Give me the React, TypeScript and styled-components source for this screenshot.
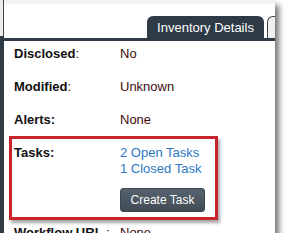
import styled, { createGlobalStyle } from "styled-components";

const GlobalStyle = createGlobalStyle`
  html, body {
    margin: 0;
    padding: 0;
    background: #ffffff;
  }
  body {
    font-family: "Liberation Sans", Arial, sans-serif;
    font-size: 13px;
  }
`;

type Field = {
  label: string;
  boldColon?: boolean;
  value: string;
};

const fields: Field[] = [
  { label: "Disclosed", value: "No" },
  { label: "Modified", value: "Unknown" },
  { label: "Alerts", boldColon: true, value: "None" },
];

const App = () => {
  return (
    <>
      <GlobalStyle />
      <Frame>
        <Sidebar>
          <SidebarHandle />
        </Sidebar>
        <Main>
          <TopStrip />
          <TabBar>
            <Tab $active>Inventory Details</Tab>
            <Tab />
          </TabBar>
          <Content>
            {fields.map((f) => (
              <Row key={f.label} $gap={18}>
                <Label>
                  {f.label}
                  {f.boldColon ? ":" : <Colon>:</Colon>}
                </Label>
                <Value>{f.value}</Value>
              </Row>
            ))}
            <TasksRow $gap={13}>
              <Label>Tasks:</Label>
              <TaskList>
                <TaskLink href="#">2 Open Tasks</TaskLink>
                <TaskLink href="#">1 Closed Task</TaskLink>
                <CreateButton type="button">Create Task</CreateButton>
              </TaskList>
            </TasksRow>
            <Row $gap={0}>
              <Label>
                Workflow URL <Colon>:</Colon>
              </Label>
              <Value>None</Value>
            </Row>
          </Content>
        </Main>
      </Frame>
    </>
  );
};

const Frame = styled.div`
  width: 275px;
  height: 233px;
  display: flex;
  overflow: hidden;
  background: #ffffff;
  box-shadow: 4px 5px 6px rgba(0, 0, 0, 0.55);
`;

const Sidebar = styled.div`
  width: 4px;
  flex-shrink: 0;
  background: #2e3a44;
  display: flex;
  flex-direction: column;
`;

const SidebarHandle = styled.div`
  height: 36px;
  flex-shrink: 0;
  box-sizing: border-box;
  background: #ececec;
  border-right: 1px solid #3a444c;
`;

const Main = styled.div`
  flex: 1;
  display: flex;
  flex-direction: column;
  min-width: 0;
`;

const TopStrip = styled.div`
  height: 4px;
  flex-shrink: 0;
  background: #f3f3f3;
`;

const TabBar = styled.div`
  height: 34px;
  flex-shrink: 0;
  display: flex;
  align-items: flex-end;
  gap: 3px;
  padding-left: 143px;
  border-bottom: 3px solid #2e3b46;
`;

const Tab = styled.div<{ $active?: boolean }>`
  flex-shrink: 0;
  height: 22px;
  box-sizing: border-box;
  width: ${({ $active }) => ($active ? "117px" : "20px")};
  padding-top: 2px;
  border-radius: 6px 6px 0 0;
  background: ${({ $active }) => ($active ? "#2e3b46" : "#efefef")};
  border: ${({ $active }) => ($active ? "none" : "1px solid #3a444c")};
  border-bottom: none;
  color: #ffffff;
  font-size: 13px;
  line-height: 20px;
  text-align: center;
  white-space: nowrap;
`;

const Content = styled.div`
  flex-shrink: 0;
  padding: 5px 0 0 10px;
  display: flex;
  flex-direction: column;
`;

const Row = styled.div<{ $gap: number }>`
  display: grid;
  grid-template-columns: 106px 1fr;
  line-height: 15px;
  margin-bottom: ${({ $gap }) => $gap}px;
`;

const TasksRow = styled(Row)`
  position: relative;

  &::before {
    content: "";
    position: absolute;
    top: -9px;
    left: -5px;
    width: 209px;
    height: 84px;
    box-sizing: border-box;
    border: 3px solid #c8242b;
    box-shadow: 2px 3px 3px rgba(0, 0, 0, 0.35);
    pointer-events: none;
  }
`;

const Label = styled.span`
  font-weight: 700;
  color: #111111;
  white-space: nowrap;
`;

const Colon = styled.span`
  font-weight: 400;
`;

const Value = styled.span`
  color: #3d0d0b;
`;

const TaskList = styled.div`
  display: flex;
  flex-direction: column;
  align-items: flex-start;
`;

const TaskLink = styled.a`
  color: #2b78c3;
  text-decoration: none;
  line-height: 16px;
`;

const CreateButton = styled.button`
  margin-top: 11px;
  width: 85px;
  height: 24px;
  padding: 0;
  border: 1px solid #3b4650;
  border-radius: 3px;
  background: linear-gradient(#56626d, #404b55);
  color: #ffffff;
  font-family: "Liberation Sans", Arial, sans-serif;
  font-size: 12px;
  cursor: pointer;
`;

export default App;
